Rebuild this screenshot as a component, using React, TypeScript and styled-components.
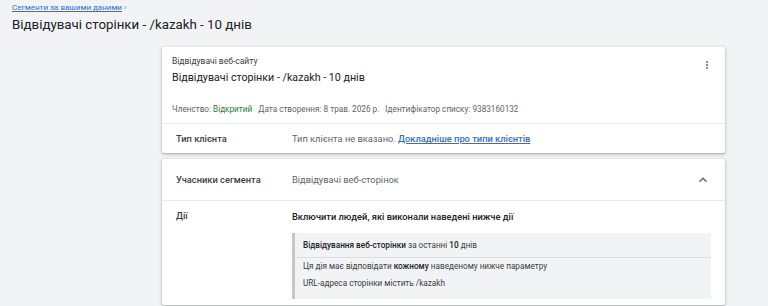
import React from "react";
import styled, { createGlobalStyle } from "styled-components";

const Global = createGlobalStyle`
  html, body { margin: 0; padding: 0; background: #f1f3f4; }
  body { font-family: Roboto, "Noto Sans", Arial, sans-serif; color: #202124; }
  * { box-sizing: border-box; }
`;

const Page = styled.div`
  width: 768px;
  height: 306px;
  overflow: hidden;
  padding: 3px 0 0 12px;
`;

const Crumbs = styled.div`
  display: flex;
  align-items: center;
  gap: 2px;
  color: #1a73e8;
  font-size: 8px;
  line-height: 10px;
`;

const Breadcrumb = styled.a`
  color: #1a73e8;
  text-decoration: underline;
`;

const Title = styled.h1`
  margin: 3px 0 0 0;
  font-size: 13.3px;
  line-height: 17px;
  font-weight: 400;
  color: #202124;
`;

const Column = styled.div`
  margin: 14px 0 0 150px;
  width: 563px;
  display: flex;
  flex-direction: column;
  gap: 6px;
`;

const Card = styled.section`
  background: #fff;
  border-radius: 2px;
  box-shadow: 0 1px 2px rgba(60, 64, 67, 0.3), 0 1px 3px 1px rgba(60, 64, 67, 0.12);
`;

const Header = styled.div`
  position: relative;
  padding: 8px 10px 8px 10px;
  border-bottom: 1px solid #e8eaed;
`;

const Kicker = styled.div`
  font-size: 8.5px;
  line-height: 12px;
  color: #3c4043;
`;

const CardTitle = styled.div`
  margin-top: 3px;
  font-size: 10.7px;
  line-height: 15px;
  color: #202124;
`;

const Meta = styled.div`
  margin-top: 18px;
  display: flex;
  gap: 6px;
  font-size: 8.2px;
  line-height: 12px;
  color: #5f6368;
`;

const Green = styled.span`
  color: #188038;
`;

const Kebab = styled.button`
  position: absolute;
  top: 14px;
  right: 17px;
  border: 0;
  background: none;
  padding: 0;
  display: flex;
  flex-direction: column;
  gap: 1px;
  & > i {
    width: 2px;
    height: 2px;
    border-radius: 50%;
    background: #5f6368;
    display: block;
  }
`;

const Row = styled.div<{ $h: number; $border?: boolean }>`
  display: grid;
  grid-template-columns: 116px 1fr auto;
  align-items: center;
  height: ${(p) => p.$h}px;
  padding: 0 14px 0 14px;
  border-bottom: ${(p) => (p.$border ? "1px solid #e8eaed" : "none")};
`;

const Label = styled.div`
  font-size: 9.3px;
  color: #3c4043;
  font-weight: 500;
`;

const Value = styled.div`
  font-size: 9.3px;
  color: #5f6368;
`;

const Link = styled.a`
  color: #1a73e8;
  text-decoration: underline;
  font-weight: 500;
`;

const ActionsRow = styled.div`
  display: grid;
  grid-template-columns: 116px 1fr;
  padding: 9px 14px 6px 14px;
`;

const ActionsBody = styled.div`
  display: flex;
  flex-direction: column;
  gap: 10px;
`;

const Strong = styled.div`
  font-size: 9.3px;
  line-height: 13px;
  font-weight: 500;
  color: #202124;
`;

const Box = styled.div`
  width: 419px;
  background: #f1f3f4;
  border-left: 3px solid #c4c7cb;
`;

const BoxHeader = styled.div`
  height: 25px;
  display: flex;
  align-items: center;
  padding-left: 8px;
  font-size: 8.2px;
  color: #3c4043;
  border-bottom: 1px solid #dadce0;
  & b { font-weight: 500; color: #202124; }
`;

const BoxBody = styled.div`
  padding: 0 8px 7px 8px;
  font-size: 8.2px;
  line-height: 17px;
  color: #3c4043;
  & b { font-weight: 500; color: #202124; }
`;

function ChevronUp() {
  return (
    <svg width="16" height="16" viewBox="0 0 24 24" aria-hidden>
      <path d="M7.41 15.41 12 10.83l4.59 4.58L18 14l-6-6-6 6z" fill="#5f6368" />
    </svg>
  );
}

export default function App() {
  return (
    <Page>
      <Global />
      <Crumbs>
        <Breadcrumb href="#">Сегменти за вашими даними</Breadcrumb>
        <span>›</span>
      </Crumbs>
      <Title>Відвідувачі сторінки - /kazakh - 10 днів</Title>
      <Column>
        <Card>
          <Header>
            <Kicker>Відвідувачі веб-сайту</Kicker>
            <CardTitle>Відвідувачі сторінки - /kazakh - 10 днів</CardTitle>
            <Meta>
              <span>
                Членство: <Green>Відкритий</Green>
              </span>
              <span>Дата створення: 8 трав. 2026 р.</span>
              <span>Ідентифікатор списку: 9383160132</span>
            </Meta>
            <Kebab aria-label="Меню">
              <i />
              <i />
              <i />
            </Kebab>
          </Header>
          <Row $h={29}>
            <Label>Тип клієнта</Label>
            <Value>
              Тип клієнта не вказано. <Link href="#">Докладніше про типи клієнтів</Link>
            </Value>
          </Row>
        </Card>
        <Card>
          <Row $h={42} $border>
            <Label>Учасники сегмента</Label>
            <Value>Відвідувачі веб-сторінок</Value>
            <ChevronUp />
          </Row>
          <ActionsRow>
            <Label>Дії</Label>
            <ActionsBody>
              <Strong>Включити людей, які виконали наведені нижче дії</Strong>
              <Box>
                <BoxHeader>
                  <span>
                    <b>Відвідування веб-сторінки</b> за останні <b>10</b> днів
                  </span>
                </BoxHeader>
                <BoxBody>
                  <div>
                    Ця дія має відповідати <b>кожному</b> наведеному нижче параметру
                  </div>
                  <div>URL-адреса сторінки містить /kazakh</div>
                </BoxBody>
              </Box>
            </ActionsBody>
          </ActionsRow>
        </Card>
      </Column>
    </Page>
  );
}
